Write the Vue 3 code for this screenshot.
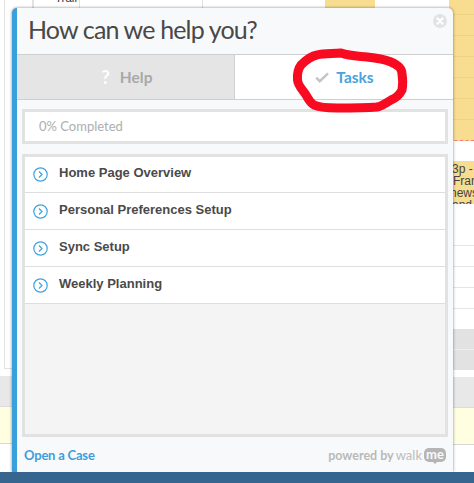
<script setup>
const tasks = ['Home Page Overview', 'Personal Preferences Setup', 'Sync Setup', 'Weekly Planning']
const slots = [0, 1, 2, 3, 4, 5]
</script>

<template>
  <div class="page">
    <div class="backdrop">
      <div class="left">
        <div class="left-box"></div>
        <div class="band"></div>
        <div class="note"></div>
      </div>
      <div class="middle">
        <div class="cell c1"></div>
        <div class="cell c2"></div>
        <div class="cell c3"><span class="train">Train</span></div>
        <div class="cell c4"></div>
        <div class="cell c5"></div>
        <div class="cell c6"></div>
      </div>
      <div class="right">
        <div class="busy">
          <div v-for="s in slots" :key="s" class="busy-slot"></div>
        </div>
        <div class="gap"></div>
        <div class="event">
          <div>3p - 4</div>
          <div class="fran">Fran</div>
          <div class="news">news</div>
          <div>and c</div>
        </div>
        <div class="hours">
          <div class="hour"></div>
          <div class="hour"></div>
          <div class="hour"></div>
          <div class="hour"></div>
        </div>
        <div class="grey-block"><div class="grey-line"></div></div>
        <div class="band"></div>
        <div class="note"></div>
      </div>
    </div>
    <div class="nav"></div>

    <section class="popup">
      <header class="head">
        <h1>How can we help you?</h1>
        <svg class="close" width="14" height="14" viewBox="0 0 14 14">
          <circle cx="7" cy="7" r="7" fill="#e1e2e4" />
          <path d="M4.4 4.400l5.200 5.200M9.600 4.400l-5.200 5.200" stroke="#fff" stroke-width="2.200" stroke-linecap="round" />
        </svg>
      </header>
      <nav class="tabs">
        <div class="tab help"><span class="q">?</span><span>Help</span></div>
        <div class="tab active">
          <svg width="14" height="11" viewBox="0 0 14 11">
            <path d="M1.200 5.600l3.600 3.600L13 1.400" fill="none" stroke="#c4c4c4" stroke-width="2.400" />
          </svg>
          <span>Tasks</span>
        </div>
      </nav>
      <div class="body">
        <div class="progress">0% Completed</div>
        <ul class="list">
          <li v-for="t in tasks" :key="t" class="row">
            <svg width="15" height="15" viewBox="0 0 15 15">
              <circle cx="7.500" cy="7.500" r="6.700" fill="none" stroke="#3ea3e0" stroke-width="1.200" />
              <path d="M6 4.500l3 3-3 3" fill="none" stroke="#3ea3e0" stroke-width="1.200" />
            </svg>
            <span>{{ t }}</span>
          </li>
        </ul>
      </div>
      <footer class="foot">
        <a class="case">Open a Case</a>
        <div class="brand">
          <span class="powered">powered by</span>
          <span class="walk">walk</span>
          <span class="me">me</span>
        </div>
      </footer>
    </section>

    <svg class="scribble" width="474" height="483" viewBox="0 0 474 483">
      <path d="M341 53C350 56 358 56 367 57C376 58 384 59 391 62C398 65 402 68 402 74C403 80 403 85 402 90C399 96 396 98 391 100C386 103 382 106 377 107C364 108 350 108 337 108C329 108 320 108 314 105C309 102 308 98 306 95C303 90 298 86 297.500 80C297 74 298 69 301 65C306 60 311 56 317 55C325 53 333 54 341 53Z" fill="none" stroke="#f80a20" stroke-width="9" />
    </svg>
  </div>
</template>

<style scoped>
.page {
  position: relative;
  width: 474px;
  height: 483px;
  overflow: hidden;
  background: #fff;
  font-family: Lato, "Liberation Sans", sans-serif;
}
.backdrop {
  display: flex;
  height: 472px;
}
.left {
  width: 13px;
  flex: none;
}
.left-box {
  height: 369px;
  margin-left: 4px;
  border-left: 1px solid #e2e2e2;
  border-bottom: 1px solid #e2e2e2;
  box-sizing: border-box;
}
.band {
  height: 31px;
  margin-top: 7px;
  background: #e8e8e8;
  border-bottom: 1px solid #dcdcdc;
  box-sizing: border-box;
}
.note {
  height: 36px;
  background: #fffee0;
  border-bottom: 1px solid #d8d8d8;
  box-sizing: content-box;
}
.middle {
  flex: 1;
  display: flex;
  height: 9px;
}
.cell {
  flex: none;
  height: 9px;
  box-sizing: border-box;
  border-right: 1px solid #e2e2e2;
}
.c1 { width: 20px; }
.c2 { width: 1px; }
.c3 { width: 46px; position: relative; overflow: hidden; font: 11.5px "Liberation Sans", sans-serif; color: #333; }
.train { position: absolute; left: 21px; top: -8px; }
.c4 { width: 123px; }
.c5 { width: 122px; border: 0; }
.c6 { width: 50px; border: 0; background: #f8dd90; }
.right {
  width: 25px;
  flex: none;
  overflow: hidden;
}
.busy {
  height: 140px;
  background: #f8dd90;
  border-bottom: 1px dashed #f57a7a;
  box-sizing: content-box;
}
.busy-slot {
  height: 21px;
  border-bottom: 1px solid #efd283;
  box-sizing: border-box;
}
.busy-slot:first-child {
  height: 15px;
}
.gap {
  height: 20px;
}
.event {
  height: 43px;
  overflow: hidden;
  background: #f8dd90;
  padding: 2px 0 0 3px;
  font: 12px/12px "Liberation Sans", sans-serif;
  color: #444;
  white-space: nowrap;
  box-sizing: border-box;
}
.fran {
  margin-left: 1px;
}
.news {
  margin-left: -2px;
}
.hours {
  height: 125px;
}
.hour {
  height: 21px;
  border-bottom: 1px solid #e6e6e6;
  box-sizing: border-box;
}
.hour:first-child {
  height: 42px;
}
.grey-block {
  height: 41px;
  background: #e2e2e2;
}
.grey-line {
  height: 21px;
  border-bottom: 1px solid #eee;
  box-sizing: border-box;
}
.nav {
  position: relative;
  z-index: 2;
  height: 11px;
  background: #36658f;
}
.popup {
  position: absolute;
  left: 12px;
  top: 8px;
  width: 441px;
  height: 464px;
  box-sizing: border-box;
  display: flex;
  flex-direction: column;
  background: #f8f9fb;
  border-left: 5px solid #3aa0dc;
  border-radius: 5px 5px 0 0;
  box-shadow: 0 0 3px rgba(0, 0, 0, 0.5);
}
.head {
  position: relative;
  height: 47px;
  flex: none;
  box-sizing: border-box;
  border-bottom: 1px solid #cfcfcf;
  padding-left: 11px;
}
h1 {
  margin: 0;
  font-size: 25px;
  line-height: 43px;
  font-weight: 400;
  letter-spacing: -0.85px;
  color: #484848;
  white-space: nowrap;
}
.close {
  position: absolute;
  right: 6px;
  top: 6px;
}
.tabs {
  display: flex;
  height: 45px;
  flex: none;
  box-sizing: border-box;
  border-bottom: 1px solid #cfcfcf;
}
.tab {
  display: flex;
  align-items: center;
  justify-content: center;
  gap: 7px;
  font-size: 15.5px;
  font-weight: 700;
}
.help {
  width: 217px;
  flex: none;
  background: #e5e5e5;
  color: #a9a9a9;
  gap: 10px;
  padding-left: 3px;
  box-sizing: border-box;
}
.q {
  color: #fff;
  font-size: 18px;
}
.active {
  flex: 1;
  background: #fff;
  border-left: 1px solid #cfcfcf;
  color: #4aa3dc;
  padding-left: 1px;
}
.body {
  flex: 1;
  display: flex;
  flex-direction: column;
  gap: 10px;
  padding: 9px 5px 0 5px;
  min-height: 0;
}
.progress {
  height: 35px;
  flex: none;
  box-sizing: border-box;
  border: 3px solid #e2e2e2;
  background: #fff;
  padding-left: 14px;
  font-size: 13px;
  line-height: 29px;
  color: #aeaeae;
}
.list {
  height: 283px;
  flex: none;
  margin: 0;
  padding: 0;
  list-style: none;
  box-sizing: border-box;
  border: 3px solid #e2e2e2;
  background: #f4f4f4;
}
.row {
  height: 37px;
  box-sizing: border-box;
  display: flex;
  align-items: center;
  gap: 11px;
  padding: 0 0 0 8px;
  background: #fff;
  border-bottom: 1px solid #dedede;
  font: 700 13px "Liberation Sans", sans-serif;
  color: #4a4a4a;
}
.row:first-child {
  height: 36px;
}
.row span {
  margin-top: -4px;
}
.foot {
  flex: none;
  height: 35px;
  display: flex;
  align-items: center;
  justify-content: space-between;
  padding: 1px 7px 0 7px;
  box-sizing: border-box;
}
.case {
  font-size: 13px;
  font-weight: 700;
  letter-spacing: -0.2px;
  color: #3d9edc;
}
.brand {
  display: flex;
  align-items: center;
  color: #b9b9b9;
}
.powered {
  font-size: 12.5px;
  font-weight: 700;
  margin-right: 2px;
}
.walk {
  font-size: 13px;
  font-weight: 400;
  color: #bcbcbc;
}
.me {
  position: relative;
  margin-left: 2px;
  width: 22px;
  height: 14px;
  border-radius: 5px;
  background: #b5b5b5;
  color: #f8f9fb;
  font-size: 13px;
  font-weight: 700;
  line-height: 12px;
  text-align: center;
}
.me::after {
  content: "";
  position: absolute;
  left: 8px;
  top: 13px;
  border: 3px solid transparent;
  border-top-color: #b5b5b5;
}
.scribble {
  position: absolute;
  left: 0;
  top: 0;
  z-index: 3;
  pointer-events: none;
}
</style>
